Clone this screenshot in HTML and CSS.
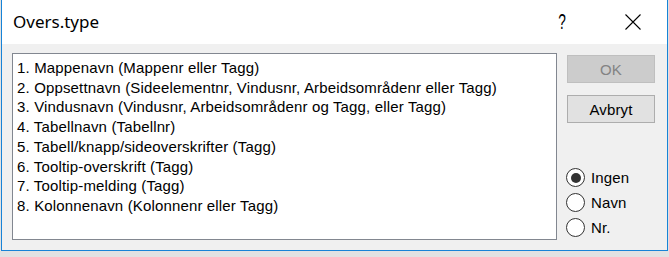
FILE: index.html
```html
<!DOCTYPE html>
<html lang="no">
<head>
<meta charset="utf-8">
<title>Overs.type</title>
<link rel="stylesheet" href="styles.css">
</head>
<body>
<div class="window">
  <div class="titlebar">
    <div class="title">Overs.type</div>
    <div class="help">?</div>
    <svg class="close" width="16" height="16" viewBox="0 0 16 16" aria-label="Lukk">
      <path d="M0.5 0.5 L15.5 15.5 M15.5 0.5 L0.5 15.5" stroke="#000" stroke-width="1.1" fill="none"/>
    </svg>
  </div>
  <div class="body">
    <div class="listbox">
      <div class="item">1. Mappenavn (Mappenr eller Tagg)</div>
      <div class="item">2. Oppsettnavn (Sideelementnr, Vindusnr, Arbeidsområdenr eller Tagg)</div>
      <div class="item">3. Vindusnavn (Vindusnr, Arbeidsområdenr og Tagg, eller Tagg)</div>
      <div class="item">4. Tabellnavn (Tabellnr)</div>
      <div class="item">5. Tabell/knapp/sideoverskrifter (Tagg)</div>
      <div class="item">6. Tooltip-overskrift (Tagg)</div>
      <div class="item">7. Tooltip-melding (Tagg)</div>
      <div class="item">8. Kolonnenavn (Kolonnenr eller Tagg)</div>
    </div>
    <div class="side">
      <div class="btn btn-disabled">OK</div>
      <div class="btn">Avbryt</div>
      <div class="radios">
        <div class="radio"><span class="circle checked"></span><span class="label">Ingen</span></div>
        <div class="radio"><span class="circle"></span><span class="label">Navn</span></div>
        <div class="radio"><span class="circle"></span><span class="label">Nr.</span></div>
      </div>
    </div>
  </div>
</div>
</body>
</html>
```

FILE: styles.css
```css
html, body {
  margin: 0;
  padding: 0;
}
body {
  background: #e2e2e2;
  width: 669px;
  height: 257px;
  overflow: hidden;
  font-family: "Liberation Sans", Arial, sans-serif;
  font-size: 15px;
  color: #000;
}
.window {
  margin-left: 1px;
  width: 667px;
  height: 251px;
  box-sizing: border-box;
  border-left: 1px solid #1883d7;
  border-right: 1px solid #1883d7;
  border-bottom: 1px solid #1883d7;
  background: #f0f0f0;
}
.titlebar {
  height: 44px;
  background: #fff;
  display: flex;
  align-items: center;
  padding-left: 11px;
}
.title {
  flex: 1;
  font-family: "Noto Sans", "Open Sans", sans-serif;
  font-size: 17px;
  padding-bottom: 1px;
}
.help {
  width: 14px;
  text-align: center;
  font-family: "Liberation Sans", sans-serif;
  font-size: 22px;
  line-height: 22px;
  transform: scaleX(0.62);
  margin-right: 56px;
  padding-bottom: 1px;
}
.close {
  display: block;
  margin-right: 26px;
}
.body {
  display: flex;
  padding: 9px 12px 0 10px;
}
.listbox {
  width: 545px;
  height: 187px;
  box-sizing: border-box;
  border: 1px solid #828790;
  background: #fff;
  padding: 4px 4px;
  letter-spacing: 0.15px;
}
.item {
  line-height: 19.7px;
  white-space: nowrap;
}
.side {
  margin-left: 10px;
  width: 88px;
  height: 187px;
  box-sizing: border-box;
  padding-top: 2px;
  display: flex;
  flex-direction: column;
}
.btn {
  height: 28px;
  box-sizing: border-box;
  border: 1px solid #adadad;
  background: #e1e1e1;
  display: flex;
  align-items: center;
  justify-content: center;
  margin-bottom: 12px;
  letter-spacing: 0.15px;
}
.btn-disabled {
  background: #cccccc;
  border-color: #bfbfbf;
  color: #838383;
}
.radios {
  margin-top: auto;
  display: flex;
  flex-direction: column;
}
.radio {
  height: 25px;
  display: flex;
  align-items: center;
}
.circle {
  width: 19px;
  height: 19px;
  box-sizing: border-box;
  margin-left: -1px;
  border: 1px solid #333;
  border-radius: 50%;
  background: #fff;
  display: flex;
  align-items: center;
  justify-content: center;
}
.circle.checked::after {
  content: "";
  width: 10px;
  height: 10px;
  border-radius: 50%;
  background: #333;
}
.label {
  margin-left: 6px;
  letter-spacing: 0.15px;
}
```
